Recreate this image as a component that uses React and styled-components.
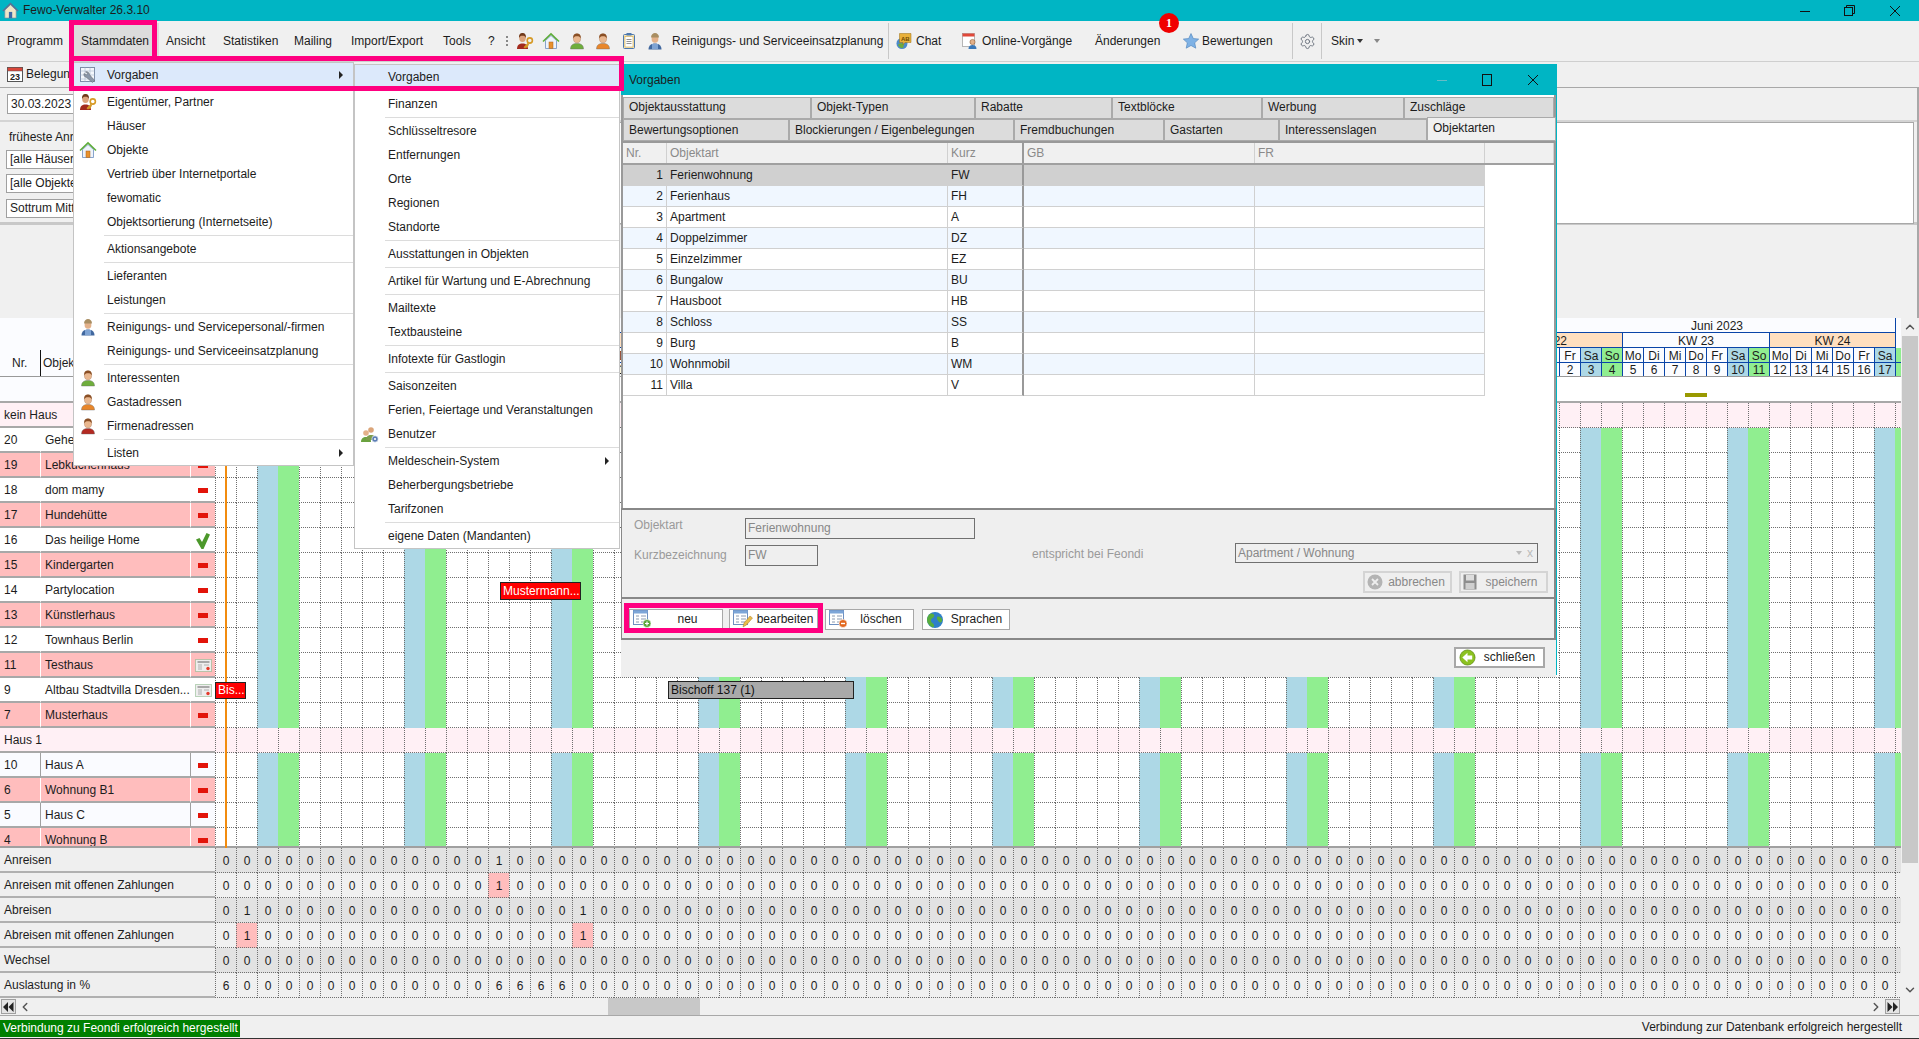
import React from 'react';
import styled, { createGlobalStyle } from 'styled-components';
import { ChevronUp, ChevronDown, ChevronLeft, ChevronRight, Settings } from 'lucide-react';

const GlobalStyle = createGlobalStyle`
  html, body { margin: 0; padding: 0; background: #f0f0f0; }
  body { font: 12px/1.2 "Liberation Sans", Arial, sans-serif; color: #1c1c1c; }
  * { box-sizing: border-box; }
`;

const TEAL = '#00b5c4';
const PINK = '#ff0080';
const COL = 21;

const Window = styled.div`
  position: relative;
  width: 1919px;
  height: 1039px;
  overflow: hidden;
  background: #f0f0f0;
  border-bottom: 1px solid #333;
`;

/* title bar */
const TitleBar = styled.div`
  height: 21px;
  background: ${TEAL};
  display: flex;
  align-items: center;
  padding-left: 2px;
  gap: 4px;
`;
const WinControls = styled.div`
  margin-left: auto;
  display: flex;
  margin-right: 2px;
`;
const WinButton = styled.div`
  width: 45px;
  height: 21px;
  display: flex;
  align-items: center;
  justify-content: center;
`;

/* menu bar */
const MenuBar = styled.div`
  position: relative;
  height: 41px;
  display: flex;
  align-items: center;
  border-bottom: 1px solid #cfcfcf;
`;
const MenuEntry = styled.div`
  width: ${p => p.$w}px;
  height: 36px;
  padding-left: 7px;
  display: flex;
  align-items: center;
  flex: none;
  background: ${p => (p.$open ? '#dcdcdc' : 'transparent')};
`;
const Grip = styled.div`
  width: 6px;
  height: 10px;
  flex: none;
  border-left: 2px dotted #888;
`;
const ToolIcon = styled.div`
  width: 26px;
  height: 36px;
  flex: none;
  display: flex;
  align-items: center;
  justify-content: center;
`;
const GearSlot = styled(ToolIcon)`
  width: 20px;
`;
const ToolButton = styled.div`
  position: relative;
  width: ${p => p.$w}px;
  height: 36px;
  flex: none;
  display: flex;
  align-items: center;
  gap: ${p => p.$gap ?? 4}px;
  padding-left: ${p => p.$pad ?? 2}px;
  white-space: nowrap;
`;
const ToolSep = styled.div`
  width: 9px;
  height: 36px;
  flex: none;
  position: relative;
  &::after {
    content: '';
    position: absolute;
    left: 4px;
    top: 0;
    bottom: 0;
    border-left: 1px solid #c8c8c8;
  }
`;
const Badge = styled.div`
  position: absolute;
  left: 66px;
  top: -10px;
  width: 20px;
  height: 20px;
  border-radius: 50%;
  background: #f00000;
  color: #fff;
  font: bold 12px "Liberation Serif", serif;
  display: flex;
  align-items: center;
  justify-content: center;
  z-index: 3;
`;
const Caret = styled.span`
  width: 0;
  height: 0;
  margin-left: ${p => p.$m ?? 0}px;
  border-left: 3px solid transparent;
  border-right: 3px solid transparent;
  border-top: 4px solid ${p => p.$c ?? '#333'};
`;

/* upper panel */
const BookingTab = styled.div`
  position: absolute;
  left: 7px;
  top: 66px;
  display: flex;
  align-items: center;
  gap: 3px;
`;
const UpperPanel = styled.div`
  position: absolute;
  left: 0;
  top: 87px;
  width: 1919px;
  height: 231px;
  border: 1px solid #a8a8a8;
  border-width: 1px 2px 0 0;
`;
const FilterBand = styled.div`
  position: absolute;
  left: 0;
  top: 32px;
  width: 100%;
  height: 105px;
  border-top: 2px solid #d4d4d4;
  border-bottom: 3px solid #c8c8c8;
`;
const WhiteBox = styled.div`
  position: absolute;
  left: 300px;
  right: 3px;
  top: 0;
  height: 102px;
  background: #fff;
  border: 1px solid #a8a8a8;
`;
const FieldBox = styled.div`
  position: absolute;
  left: ${p => p.$x}px;
  top: ${p => p.$y}px;
  width: 90px;
  height: ${p => p.$h ?? 20}px;
  background: #fff;
  border: 1px solid #a0a0a0;
  padding-left: 3px;
  display: flex;
  align-items: center;
  white-space: nowrap;
  overflow: hidden;
`;
const FilterLabel = styled.div`
  position: absolute;
  left: 9px;
  top: 8px;
`;

/* calendar board */
const Board = styled.div`
  position: absolute;
  left: 0;
  top: 318px;
  width: 1901px;
  height: 680px;
  overflow: hidden;
  background: #fff;
`;
const BoardHead = styled.div`
  display: flex;
  height: 59px;
  border-bottom: 1px solid #999;
  background: #fbfcff;
`;
const HeadLabels = styled.div`
  width: 215px;
  flex: none;
  display: flex;
  align-items: flex-end;
  background: #fbfcff;
`;
const HeadNr = styled.div`
  width: 41px;
  height: 26px;
  padding: 6px 0 0 12px;
  border-right: 1px solid #111;
`;
const HeadName = styled.div`
  height: 26px;
  padding: 6px 0 0 2px;
`;
const CalHead = styled.div`
  display: flex;
  flex-direction: column;
  flex: none;
`;
const CalRow = styled.div`
  display: flex;
  height: ${p => p.$h}px;
`;
const CalCell = styled.div`
  flex: none;
  width: ${p => p.$span * COL}px;
  padding-top: 1px;
  border-left: 1px solid #0a45a8;
  border-bottom: ${p => (p.$under ? '1px solid #0a45a8' : 'none')};
  background: ${p => p.$bg};
  display: flex;
  align-items: center;
  justify-content: center;
  overflow: hidden;
  white-space: nowrap;
  font-size: 12px;
  line-height: 1;
`;
const BlankRow = styled.div`
  height: 26px;
  background: #fff;
  border-bottom: 2px solid #a8a8a8;
  display: flex;
`;
const BlankLeft = styled.div`
  width: 215px;
  background: #fbfcff;
`;
const BoardRow = styled.div`
  display: flex;
  height: ${p => p.$h ?? 25}px;
  overflow: hidden;
`;
const NrCell = styled.div`
  width: 41px;
  flex: none;
  padding: 2px 0 0 4px;
  height: 25px;
  display: flex;
  align-items: center;
  background: ${p => rowTone(p.$tone)};
  border-bottom: 2px solid #a8a8a8;
  border-right: 1px solid ${p => (p.$tone === 'soft' ? '#a0a0a0' : '#fff')};
`;
const NameCell = styled.div`
  width: 150px;
  flex: none;
  padding: 2px 0 0 4px;
  height: 25px;
  display: flex;
  align-items: center;
  white-space: nowrap;
  overflow: hidden;
  background: ${p => rowTone(p.$tone)};
  border-bottom: 2px solid #a8a8a8;
  border-right: 1px solid ${p => (p.$tone === 'soft' ? '#a0a0a0' : '#fff')};
`;
const StateCell = styled.div`
  width: 24px;
  flex: none;
  height: 25px;
  padding-top: 2px;
  display: flex;
  align-items: center;
  justify-content: center;
  background: ${p => rowTone(p.$tone)};
  border-bottom: 2px solid #a8a8a8;
`;
const MinusMark = styled.div`
  width: 10px;
  height: 5px;
  background: #e2140a;
`;
const GroupLabel = styled.div`
  width: 215px;
  flex: none;
  padding: 2px 0 0 4px;
  display: flex;
  align-items: center;
  background: #fff0f5;
  border-bottom: 2px solid #a8a8a8;
`;
const DayStrip = styled.div`
  display: flex;
  flex: none;
  height: 25px;
`;
const DayCell = styled.div`
  width: ${COL}px;
  flex: none;
  background: ${p => dayTone(p.$kind)};
  border-left: 1px dotted ${p => (p.$kind === 'sun' ? 'transparent' : '#6f6f6f')};
  border-bottom: 1px dotted ${p => (p.$kind === 'sat' || p.$kind === 'sun' ? 'transparent' : '#6f6f6f')};
`;
const PinkDay = styled(DayCell)`
  background: #fff0f5;
`;
const StatLabel = styled.div`
  width: 215px;
  flex: none;
  padding: 2px 0 0 4px;
  display: flex;
  align-items: center;
  background: #efefef;
  border-bottom: 2px solid #b0b0b0;
`;
const StatCell = styled.div`
  width: ${COL}px;
  flex: none;
  padding-top: 2px;
  display: flex;
  align-items: center;
  justify-content: center;
  background: ${p => p.$bg};
  border-left: 1px dotted #6f6f6f;
  border-bottom: 1px dotted #6f6f6f;
`;
const StatTop = styled.div`
  height: 2px;
  background: #a0a0a0;
  margin-top: -2px;
  position: relative;
`;
const TodayLine = styled.div`
  position: absolute;
  left: 225px;
  top: 59px;
  width: 2px;
  height: 471px;
  background: #f28c0f;
`;
const Booking = styled.div`
  position: absolute;
  left: ${p => p.$x}px;
  top: ${p => p.$y}px;
  width: ${p => p.$w}px;
  height: ${p => p.$h}px;
  background: ${p => p.$bg};
  color: ${p => p.$fg};
  border: 1px solid #222;
  padding-left: 2px;
  display: flex;
  align-items: center;
  white-space: nowrap;
  overflow: hidden;
`;
const OliveMark = styled.div`
  position: absolute;
  left: 1685px;
  top: 75px;
  width: 22px;
  height: 4px;
  background: #999900;
`;

/* scrollbars and status bar */
const VScroll = styled.div`
  position: absolute;
  left: 1902px;
  top: 318px;
  width: 16px;
  height: 680px;
  background: #f0f0f0;
  color: #555;
`;
const VThumb = styled.div`
  position: absolute;
  left: 0;
  top: 18px;
  width: 16px;
  height: 527px;
  background: #c8c8c8;
`;
const VArrow = styled.div`
  position: absolute;
  left: 0;
  top: ${p => p.$y}px;
  width: 16px;
  height: 16px;
  display: flex;
  align-items: center;
  justify-content: center;
`;
const HScroll = styled.div`
  position: absolute;
  left: 0;
  top: 998px;
  width: 1919px;
  height: 18px;
  background: #f0f0f0;
  border-bottom: 1px solid #a8a8a8;
  color: #555;
`;
const HThumb = styled.div`
  position: absolute;
  left: 608px;
  top: 0;
  width: 92px;
  height: 17px;
  background: #c8c8c8;
`;
const HEndButton = styled.div`
  position: absolute;
  left: ${p => p.$x}px;
  top: 1px;
  width: 15px;
  height: 15px;
  border: 1px solid #a0a0a0;
  background: #e4e4e4;
  display: flex;
  align-items: center;
  justify-content: center;
`;
const HArrow = styled.div`
  position: absolute;
  left: ${p => p.$x}px;
  top: 1px;
  width: 14px;
  height: 15px;
  display: flex;
  align-items: center;
  justify-content: center;
`;
const StatusBar = styled.div`
  position: absolute;
  left: 0;
  top: 1016px;
  width: 1919px;
  height: 22px;
  display: flex;
  align-items: center;
  justify-content: space-between;
  padding-right: 17px;
`;
const StatusOk = styled.div`
  height: 17px;
  width: 240px;
  margin-top: 2px;
  background: #008000;
  color: #fff;
  padding-left: 3px;
  display: flex;
  align-items: center;
`;

/* dropdown menus */
const Menu = styled.div`
  position: absolute;
  left: ${p => p.$x}px;
  top: ${p => p.$y}px;
  width: ${p => p.$w}px;
  background: #fff;
  border: 1px solid #c4c4c4;
  z-index: 30;
`;
const MenuRow = styled.div`
  position: relative;
  height: 24px;
  display: flex;
  align-items: center;
  padding-left: ${p => p.$pad}px;
  white-space: nowrap;
  background: ${p => (p.$active ? '#dce9fb' : 'transparent')};
`;
const MenuIcon = styled.div`
  position: absolute;
  left: ${p => p.$x}px;
  top: 3px;
  width: 18px;
  height: 18px;
`;
const MenuArrow = styled.span`
  position: absolute;
  right: ${p => p.$r}px;
  top: 8px;
  width: 0;
  height: 0;
  border-top: 4px solid transparent;
  border-bottom: 4px solid transparent;
  border-left: 4px solid #222;
`;
const MenuSep = styled.div`
  height: 3px;
  margin-left: ${p => p.$pad}px;
  display: flex;
  align-items: center;
  &::after {
    content: '';
    flex: 1;
    border-top: 1px solid #dcdcdc;
  }
`;
const PinkFrame = styled.div`
  position: absolute;
  left: ${p => p.$x}px;
  top: ${p => p.$y}px;
  width: ${p => p.$w}px;
  height: ${p => p.$h}px;
  border: 5px solid ${PINK};
  z-index: 40;
  pointer-events: none;
`;

/* dialog */
const Dialog = styled.div`
  position: absolute;
  left: 621px;
  top: 64px;
  width: 936px;
  height: 611px;
  background: #efefef;
  border-right: 1px solid ${TEAL};
  z-index: 20;
`;
const DialogTitle = styled.div`
  height: 31px;
  background: ${TEAL};
  display: flex;
  align-items: center;
  padding: 2px 0 0 8px;
  position: relative;
`;
const DialogControl = styled.div`
  position: absolute;
  left: ${p => p.$x}px;
  top: 9px;
  width: 14px;
  height: 14px;
  display: flex;
  align-items: center;
  justify-content: center;
`;
const DialogFrame = styled.div`
  height: 580px;
  padding-top: 2px;
  background: #fff;
  border-left: 2px solid #999;
  border-right: 2px solid #999;
`;
const TabRow = styled.div`
  display: flex;
  height: 22px;
`;
const Tab = styled.div`
  width: ${p => p.$w}px;
  flex: none;
  height: ${p => (p.$active ? 24 : 22)}px;
  margin-top: ${p => (p.$active ? -2 : 0)}px;
  padding: 0 0 ${p => p.$lift ?? 0}px 5px;
  display: flex;
  align-items: center;
  background: ${p => (p.$active ? '#f0f0f0' : '#dcdcdc')};
  border: 1px solid #aaa;
  position: relative;
  z-index: ${p => (p.$active ? 2 : 1)};
`;
const GridBox = styled.div`
  height: 367px;
  background: #fff;
  border-top: 2px solid #999;
`;
const GridRow = styled.div`
  display: grid;
  grid-template-columns: 44px 281px 76px 231px 230px ${p => (p.$head ? '1fr' : '')};
  height: ${p => (p.$head ? 22 : 21)}px;
  width: ${p => (p.$head ? 'auto' : '862px')};
  background: ${p => p.$bg};
  ${p => (p.$head ? 'border-bottom: 2px solid #a0a0a0; color: #8a8a8a;' : '')}
`;
const GridCell = styled.div`
  padding: 0 3px 0 ${p => (p.$right ? 0 : 3)}px;
  display: flex;
  align-items: center;
  justify-content: ${p => (p.$right ? 'flex-end' : 'flex-start')};
  border-right: ${p => (p.$strong ? '2px solid #999' : '1px solid #d0d0d0')};
  border-bottom: ${p => (p.$head ? 'none' : '1px solid #d0d0d0')};
  overflow: hidden;
`;
const DetailPanel = styled.div`
  position: relative;
  height: 91px;
  margin: 0 -2px;
  background: #efefef;
  border: 1px solid #888;
  border-width: 2px 2px 2px 1px;
  color: #9a9a9a;
`;
const DetailLabel = styled.div`
  position: absolute;
  left: ${p => p.$x}px;
  top: ${p => p.$y}px;
`;
const DetailInput = styled.div`
  position: absolute;
  left: ${p => p.$x}px;
  top: ${p => p.$y}px;
  width: ${p => p.$w}px;
  height: ${p => p.$h}px;
  border: 1px solid #707070;
  padding-left: 2px;
  display: flex;
  align-items: center;
  color: #888;
`;
const SelectTools = styled.div`
  margin-left: auto;
  margin-right: 4px;
  display: flex;
  align-items: center;
  gap: 5px;
  color: #bbb;
`;
const FlatButton = styled.div`
  position: absolute;
  left: ${p => p.$x}px;
  top: 61px;
  width: ${p => p.$w}px;
  height: 22px;
  border: 2px solid #d4d4d4;
  display: flex;
  align-items: center;
  padding-left: 2px;
  color: #888;
`;
const ButtonText = styled.span`
  flex: 1;
  text-align: center;
  white-space: nowrap;
`;
const ActionRow = styled.div`
  display: flex;
  align-items: center;
  height: 41px;
  margin: 0 -2px;
  padding: 2px 0 0 7px;
  background: #efefef;
  border: 1px solid #888;
  border-width: 0 2px 2px 1px;
`;
const ActionButton = styled.div`
  width: ${p => p.$w}px;
  height: 21px;
  flex: none;
  margin-left: ${p => p.$m ?? 0}px;
  background: #fff;
  border: 1px solid #a8a8a8;
  display: flex;
  align-items: center;
  padding-left: 3px;
`;
const FooterRow = styled.div`
  height: 37px;
  margin: 0 -2px;
  background: #efefef;
  display: flex;
  justify-content: flex-end;
  padding: 7px 11px 0 0;
`;
const CloseButton = styled(ActionButton)`
  border-width: 2px;
`;

/* drawings */
const Person = ({ shirt, hair = '#8a4f25', size = 18 }) => (
  <svg width={size} height={size} viewBox="0 0 18 18">
    <path d="M2.500 17c0-4 2.600-5.600 6.500-5.600s6.500 1.600 6.500 5.600z" fill={shirt} stroke="#666" strokeWidth=".4" />
    <ellipse cx="9" cy="6.500" rx="3.600" ry="4.300" fill="#e9b78f" stroke="#a77450" strokeWidth=".4" />
    <path d="M5.300 6.500C4.800 2.400 7 1.500 9 1.500s4.200 1 3.700 5c-.6-1.800-1.700-2.300-3.700-2.300s-3.100.5-3.700 2.300z" fill={hair} />
  </svg>
);
const KeyPerson = () => (
  <svg width="18" height="18" viewBox="0 0 18 18">
    <path d="M1 17c0-4 2.300-5.600 5.500-5.600S12 13 12 17z" fill="#a32a1d" />
    <ellipse cx="6.500" cy="6" rx="3.300" ry="4" fill="#dca37c" />
    <path d="M3.100 6C2.700 2.200 4.600 1 6.500 1s3.800 1.200 3.400 5C9.300 4.300 8.300 3.800 6.500 3.800S3.700 4.300 3.100 6z" fill="#70391a" />
    <circle cx="13.800" cy="8.500" r="2.600" fill="none" stroke="#d69a26" strokeWidth="1.600" />
    <path d="M12 10.500l-4.500 4.700 1.500 1.200 1.200-1 .8.500 2-3.500z" fill="#d69a26" />
  </svg>
);
const House = () => (
  <svg width="18" height="18" viewBox="0 0 18 18">
    <path d="M3.500 8.500V16.500H14.500V8.500L9 3.500z" fill="#eef3fb" stroke="#6d8fc0" strokeWidth=".8" />
    <path d="M1 9.500L9 1.800l8 7.700" fill="none" stroke="#5fae3a" strokeWidth="1.600" />
    <rect x="7" y="10" width="4" height="6.500" fill="#e8912d" stroke="#a9601a" strokeWidth=".5" />
  </svg>
);
const AppHouse = () => (
  <svg width="17" height="17" viewBox="0 0 18 18">
    <path d="M3 8.500V17H15V8.500L9 3z" fill="#f0e6c8" stroke="#7a8aa0" strokeWidth=".7" />
    <path d="M1 9.500L9 1.500l8 8" fill="none" stroke="#5a6f92" strokeWidth="1.500" />
    <rect x="7.300" y="10.500" width="3.500" height="6.500" fill="#3f68a8" />
  </svg>
);
const Clipboard = () => (
  <svg width="18" height="18" viewBox="0 0 18 18">
    <rect x="3.500" y="2.500" width="11" height="14" rx="1" fill="#f7e6b5" stroke="#4d78b0" />
    <rect x="5" y="4.500" width="8" height="10.500" fill="#fff" stroke="#c99a33" strokeWidth=".5" />
    <rect x="6.500" y="1" width="5" height="2.500" fill="#4d78b0" />
    <path d="M6.500 7.500h5M6.500 9.500h5M6.500 11.500h5" stroke="#777" strokeWidth=".8" />
  </svg>
);
const Worker = ({ size = 18 }) => (
  <svg width={size} height={size} viewBox="0 0 18 18">
    <path d="M2.500 17.500c0-4 2.600-6 6.500-6s6.500 2 6.500 6z" fill="#41689f" />
    <rect x="6" y="12" width="6" height="5" fill="#7ea3d3" />
    <ellipse cx="9" cy="7" rx="3.400" ry="3.800" fill="#e3b18a" />
    <path d="M5 5.500C5 2.500 7 1 9 1s4 1.500 4 4.500z" fill="#a98e62" />
  </svg>
);
const ChatIcon = () => (
  <svg width="18" height="18" viewBox="0 0 18 18">
    <circle cx="7" cy="11.500" r="5.500" fill="#4b8ac9" />
    <path d="M3 13c1.500-2.500 4-2 6-1l-1 4c-2 .5-4-1-5-3z" fill="#6faa3c" />
    <path d="M4.500 1.500h11.500v9h-6l-2 2v-2H4.500z" fill="#e8b13c" stroke="#9b6d12" strokeWidth=".5" />
    <text x="6" y="8.500" fontSize="6" fontWeight="bold" fontFamily="Liberation Sans" fill="#6d4a05">AB</text>
  </svg>
);
const OnlineIcon = () => (
  <svg width="18" height="18" viewBox="0 0 18 18">
    <rect x="1.500" y="1.500" width="12" height="13" fill="#fff" stroke="#9a9a9a" strokeWidth=".7" />
    <rect x="1.500" y="1.500" width="12" height="3" fill="#e0493a" />
    <path d="M7.500 17c0-3 1.800-4 4-4s4 1 4 4z" fill="#3a78b8" />
    <circle cx="11.500" cy="10" r="2.600" fill="#e3b18a" stroke="#7a4a20" strokeWidth=".5" />
  </svg>
);
const StarIcon = () => (
  <svg width="18" height="18" viewBox="0 0 18 18">
    <path d="M9 1.500l2.300 5 5.400.6-4 3.700 1.100 5.400L9 13.500l-4.800 2.700 1.100-5.400-4-3.700 5.400-.6z" fill="#7fb2e5" stroke="#4a7fb8" strokeWidth=".6" />
  </svg>
);
const TableWrench = () => (
  <svg width="18" height="18" viewBox="0 0 18 18">
    <rect x="1.500" y="1.500" width="14" height="14" fill="#f4f7fc" stroke="#7d8ea8" />
    <path d="M1.500 5h14M1.500 9h14M1.500 13h14M6 1.500v14M11 1.500v14" stroke="#aab8cc" strokeWidth=".6" />
    <path d="M5 7.500a3 3 0 0 0 2.500 4l6 5 2-2-5-6a3 3 0 0 0-4-2.700l2 2-1 1z" fill="#8a96a8" stroke="#555" strokeWidth=".4" />
  </svg>
);
const UsersGear = () => (
  <svg width="20" height="18" viewBox="0 0 20 18">
    <path d="M1 17c0-3.500 2-5 5-5s5 1.500 5 5z" fill="#6aa23f" />
    <circle cx="6" cy="8" r="2.800" fill="#e3b18a" />
    <path d="M6 15c0-3.500 2-5 5-5s5 1.500 5 5z" fill="#7d9c4b" />
    <circle cx="11" cy="5" r="2.800" fill="#dba579" />
    <circle cx="15" cy="14" r="3.200" fill="#5d7fb5" stroke="#fff" strokeWidth=".6" />
    <circle cx="15" cy="14" r="1.100" fill="#fff" />
  </svg>
);
const CalendarBig = () => (
  <svg width="16" height="16" viewBox="0 0 16 16">
    <rect x=".5" y="1.500" width="15" height="14" fill="#fff" stroke="#555" />
    <rect x=".5" y="1.500" width="15" height="3.500" fill="#d9463a" stroke="#555" strokeWidth=".5" />
    <text x="8" y="13.500" textAnchor="middle" fontSize="9" fontWeight="bold" fontFamily="Liberation Sans" fill="#222">23</text>
  </svg>
);
const MiniCal = () => (
  <svg width="17" height="13" viewBox="0 0 17 13">
    <rect x=".5" y=".5" width="16" height="12" fill="#eee" stroke="#7cae7c" strokeDasharray="1 1" />
    <rect x="2.500" y="2" width="12" height="2" fill="#a8a8a8" />
    <path d="M3 6h4M3 8h4M3 10h4M9 6h5" stroke="#b0b0b0" />
    <circle cx="13" cy="9.500" r="1.700" fill="#e43a2a" />
  </svg>
);
const CheckMark = () => (
  <svg width="14" height="16" viewBox="0 0 14 16">
    <path d="M0 6.500l3.500-1.500 2.500 4L10.500 0 14 1.500 7.500 16H5.500z" fill="#4c982b" />
  </svg>
);
const DocIcon = ({ badge }) => (
  <svg width="20" height="19" viewBox="0 0 20 19">
    <rect x=".5" y=".5" width="14" height="14" fill="#fff" stroke="#6d8fc0" />
    <rect x=".5" y=".5" width="14" height="3" fill="#7da6d8" />
    <path d="M3 6h3M3 9h3M3 12h3M8 6h5M8 9h5M8 12h5" stroke="#8a9ab0" />
    {badge === 'add' && (
      <g>
        <circle cx="14" cy="13.500" r="4" fill="#5aa63a" stroke="#fff" strokeWidth=".6" />
        <path d="M12 13.500h4M14 11.500v4" stroke="#fff" strokeWidth="1.200" />
      </g>
    )}
    {badge === 'edit' && <path d="M10 17l1-4 6-7 2.500 2-6 7z" fill="#e9bd4a" stroke="#a8782a" strokeWidth=".5" />}
    {badge === 'del' && (
      <g>
        <circle cx="14" cy="13.500" r="4" fill="#e2661c" stroke="#fff" strokeWidth=".6" />
        <path d="M12 13.500h4" stroke="#fff" strokeWidth="1.400" />
      </g>
    )}
  </svg>
);
const Globe = () => (
  <svg width="18" height="18" viewBox="0 0 18 18">
    <circle cx="9" cy="9" r="8" fill="#2f7fc9" />
    <path d="M5 2.500c2 0 4 1 3 3S5 7 5 9.500 7.500 12 8 14s-1 2.500-2 2C3 14.500 1 12 1 9s2-6 4-6.500zM11 6c2-1 4 0 5 2 .5 2-.5 4-2 3.500S10.500 8 11 6z" fill="#58ad3e" />
  </svg>
);
const BackCircle = () => (
  <svg width="17" height="17" viewBox="0 0 18 18">
    <circle cx="9" cy="9" r="8" fill="#8cc21f" stroke="#5d8a0f" strokeWidth=".8" />
    <path d="M3.500 9L9 4v3h5v4H9v3z" fill="#fff" />
  </svg>
);
const CancelCircle = () => (
  <svg width="16" height="16" viewBox="0 0 16 16">
    <circle cx="8" cy="8" r="7.500" fill="#b4b4b4" />
    <path d="M5 5l6 6M11 5l-6 6" stroke="#eee" strokeWidth="1.800" />
  </svg>
);
const Floppy = () => (
  <svg width="14" height="16" viewBox="0 0 14 16">
    <rect x=".5" y=".5" width="13" height="15" fill="#8e8e8e" />
    <rect x="3" y="1" width="8" height="5.500" fill="#ddd" />
    <rect x="2.500" y="9" width="9" height="6" fill="#cfcfcf" />
  </svg>
);
const EndArrows = ({ flip }) => (
  <svg width="11" height="10" viewBox="0 0 11 10">
    <g transform={flip ? 'matrix(-1 0 0 1 11 0)' : undefined} fill="#222">
      <path d="M5 0v10L0 5zM10.500 0v10l-5-5z" />
    </g>
  </svg>
);

const WinMin = () => (
  <svg width="12" height="12" viewBox="0 0 12 12"><path d="M1 6.500h10" stroke="#111" /></svg>
);
const WinRestore = () => (
  <svg width="12" height="12" viewBox="0 0 12 12" fill="none" stroke="#111">
    <rect x=".5" y="2.500" width="8" height="8" />
    <path d="M2.500 2.500v-2h8v8h-2" />
  </svg>
);
const WinClose = () => (
  <svg width="12" height="12" viewBox="0 0 12 12"><path d="M1 1l10 10M11 1L1 11" stroke="#111" /></svg>
);
const DlgMax = () => (
  <svg width="12" height="14" viewBox="0 0 12 14" fill="none" stroke="#111"><rect x="1.500" y="1.500" width="9" height="11" /></svg>
);
const DlgMin = () => (
  <svg width="12" height="12" viewBox="0 0 12 12"><path d="M1 6.500h10" stroke="#66bcc6" /></svg>
);

/* data */
const firstMenu = [
  { t: 'Vorgaben', icon: <TableWrench />, arrow: true, active: true },
  'sep',
  { t: 'Eigentümer, Partner', icon: <KeyPerson /> },
  { t: 'Häuser' },
  { t: 'Objekte', icon: <House /> },
  { t: 'Vertrieb über Internetportale' },
  { t: 'fewomatic' },
  { t: 'Objektsortierung (Internetseite)' },
  'sep',
  { t: 'Aktionsangebote' },
  'sep',
  { t: 'Lieferanten' },
  { t: 'Leistungen' },
  'sep',
  { t: 'Reinigungs- und Servicepersonal/-firmen', icon: <Worker /> },
  { t: 'Reinigungs- und Serviceeinsatzplanung' },
  'sep',
  { t: 'Interessenten', icon: <Person shirt="#6fae3c" /> },
  { t: 'Gastadressen', icon: <Person shirt="#e8862a" /> },
  { t: 'Firmenadressen', icon: <Person shirt="#b32a22" /> },
  'sep',
  { t: 'Listen', arrow: true },
];
const secondMenu = [
  { t: 'Vorgaben', active: true },
  'sep',
  { t: 'Finanzen' },
  'sep',
  { t: 'Schlüsseltresore' },
  { t: 'Entfernungen' },
  { t: 'Orte' },
  { t: 'Regionen' },
  { t: 'Standorte' },
  'sep',
  { t: 'Ausstattungen in Objekten' },
  'sep',
  { t: 'Artikel für Wartung und E-Abrechnung' },
  'sep',
  { t: 'Mailtexte' },
  { t: 'Textbausteine' },
  'sep',
  { t: 'Infotexte für Gastlogin' },
  'sep',
  { t: 'Saisonzeiten' },
  { t: 'Ferien, Feiertage und Veranstaltungen' },
  { t: 'Benutzer', icon: <UsersGear /> },
  'sep',
  { t: 'Meldeschein-System', arrow: true },
  { t: 'Beherbergungsbetriebe' },
  { t: 'Tarifzonen' },
  'sep',
  { t: 'eigene Daten (Mandanten)' },
];

const tabsTop = [
  ['Objektausstattung', 188],
  ['Objekt-Typen', 164],
  ['Rabatte', 137],
  ['Textblöcke', 150],
  ['Werbung', 142],
  ['Zuschläge', 150],
];
const tabsBottom = [
  ['Bewertungsoptionen', 166],
  ['Blockierungen / Eigenbelegungen', 225],
  ['Fremdbuchungen', 150],
  ['Gastarten', 115],
  ['Interessenslagen', 148],
  ['Objektarten', 129, true],
];
const kinds = [
  ['Ferienwohnung', 'FW'],
  ['Ferienhaus', 'FH'],
  ['Apartment', 'A'],
  ['Doppelzimmer', 'DZ'],
  ['Einzelzimmer', 'EZ'],
  ['Bungalow', 'BU'],
  ['Hausboot', 'HB'],
  ['Schloss', 'SS'],
  ['Burg', 'B'],
  ['Wohnmobil', 'WM'],
  ['Villa', 'V'],
];

const boardRows = [
  { group: 'kein Haus' },
  { nr: 20, name: 'Geheimtipp', tone: 'plain', state: 'minus' },
  { nr: 19, name: 'Lebkuchenhaus', tone: 'pink', state: 'minus' },
  { nr: 18, name: 'dom mamy', tone: 'plain', state: 'minus' },
  { nr: 17, name: 'Hundehütte', tone: 'pink', state: 'minus' },
  { nr: 16, name: 'Das heilige Home', tone: 'plain', state: 'check' },
  { nr: 15, name: 'Kindergarten', tone: 'pink', state: 'minus' },
  { nr: 14, name: 'Partylocation', tone: 'plain', state: 'minus' },
  { nr: 13, name: 'Künstlerhaus', tone: 'pink', state: 'minus' },
  { nr: 12, name: 'Townhaus Berlin', tone: 'plain', state: 'minus' },
  { nr: 11, name: 'Testhaus', tone: 'pink', state: 'cal' },
  { nr: 9, name: 'Altbau Stadtvilla Dresden...', tone: 'plain', state: 'cal' },
  { nr: 7, name: 'Musterhaus', tone: 'pink', state: 'minus' },
  { group: 'Haus 1' },
  { nr: 10, name: 'Haus A', tone: 'soft', state: 'minus' },
  { nr: 6, name: 'Wohnung B1', tone: 'pink', state: 'minus' },
  { nr: 5, name: 'Haus C', tone: 'soft', state: 'minus' },
  { nr: 4, name: 'Wohnung B', tone: 'pink', state: 'minus', h: 20 },
];

const statRows = [
  { label: 'Anreisen', hits: { 13: 1 } },
  { label: 'Anreisen mit offenen Zahlungen', hits: { 13: 1 }, alert: true },
  { label: 'Abreisen', hits: { 1: 1, 17: 1 } },
  { label: 'Abreisen mit offenen Zahlungen', hits: { 1: 1, 17: 1 }, alert: true },
  { label: 'Wechsel', hits: {} },
  { label: 'Auslastung in %', hits: { 0: 6, 13: 6, 14: 6, 15: 6, 16: 6 } },
];

const DAY_NAMES = ['So', 'Mo', 'Di', 'Mi', 'Do', 'Fr', 'Sa'];
const MONTHS = ['Januar', 'Februar', 'März', 'April', 'Mai', 'Juni', 'Juli'];
const LAST_DAY = 80; // only a sliver of this column is on screen, so it carries no text
const days = Array.from({ length: 81 }, (_, i) => {
  const d = new Date(2023, 2, 30 + i);
  const wd = d.getDay();
  return {
    i,
    date: d.getDate(),
    name: DAY_NAMES[wd],
    kind: wd === 6 ? 'sat' : wd === 0 ? 'sun' : 'plain',
    week: 13 + Math.floor((i + 3) / 7),
    month: `${MONTHS[d.getMonth()]} 2023`,
  };
});

function spansBy(list, key) {
  const out = [];
  list.forEach(d => {
    const last = out[out.length - 1];
    if (last && last.value === d[key]) last.span += 1;
    else out.push({ value: d[key], span: 1 });
  });
  return out;
}

function rowTone(tone) {
  if (tone === 'pink') return '#ffbdbd';
  if (tone === 'soft') return '#fafbff';
  return '#fff';
}
function dayTone(kind) {
  if (kind === 'sat') return '#add8e6';
  if (kind === 'sun') return '#90ee90';
  return 'transparent';
}
function headTone(kind) {
  if (kind === 'sat') return '#add8e6';
  if (kind === 'sun') return '#90ee90';
  return '#fbfcff';
}

const stateIcon = state => {
  if (state === 'check') return <CheckMark />;
  if (state === 'cal') return <MiniCal />;
  return <MinusMark />;
};

const MenuList = ({ items, x, y, w, pad, iconX, arrowR }) => (
  <Menu $x={x} $y={y} $w={w}>
    {items.map((it, idx) =>
      it === 'sep' ? (
        <MenuSep key={idx} $pad={pad - 3} />
      ) : (
        <MenuRow key={idx} $pad={pad} $active={it.active}>
          {it.icon && <MenuIcon $x={iconX}>{it.icon}</MenuIcon>}
          {it.t}
          {it.arrow && <MenuArrow $r={arrowR} />}
        </MenuRow>
      )
    )}
  </Menu>
);

const CalendarHead = () => {
  const shown = days.slice(0, LAST_DAY);
  return (
    <CalHead>
      <CalRow $h={15}>
        {spansBy(shown, 'month').map(m => (
          <CalCell key={m.value} $span={m.span} $bg="#fbfcff" $under>
            {m.span > 2 ? m.value : ''}
          </CalCell>
        ))}
        <CalCell $span={1} $bg="#fbfcff" />
      </CalRow>
      <CalRow $h={15}>
        {spansBy(shown, 'week').map(k => (
          <CalCell key={k.value} $span={k.span} $bg={k.value % 2 === 0 ? '#ffdfbf' : '#fbfcff'} $under>
            KW {k.value}
          </CalCell>
        ))}
        <CalCell $span={1} $bg="#fbfcff" />
      </CalRow>
      <CalRow $h={15}>
        {days.map(d => (
          <CalCell key={d.i} $span={1} $bg={headTone(d.kind)} $under>
            {d.i === LAST_DAY ? '' : d.name}
          </CalCell>
        ))}
      </CalRow>
      <CalRow $h={13}>
        {days.map(d => (
          <CalCell key={d.i} $span={1} $bg={headTone(d.kind)}>
            {d.i === LAST_DAY ? '' : d.date}
          </CalCell>
        ))}
      </CalRow>
    </CalHead>
  );
};

const DayRow = () => (
  <DayStrip>
    {days.map(d => (
      <DayCell key={d.i} $kind={d.kind} />
    ))}
  </DayStrip>
);

const PinkStrip = () => (
  <DayStrip>
    {days.map(d => (
      <PinkDay key={d.i} />
    ))}
  </DayStrip>
);

const Calendar = () => (
  <Board>
    <BoardHead>
      <HeadLabels>
        <HeadNr>Nr.</HeadNr>
        <HeadName>Objekt</HeadName>
      </HeadLabels>
      <CalendarHead />
    </BoardHead>
    <BlankRow>
      <BlankLeft />
    </BlankRow>
    {boardRows.map((r, idx) =>
      r.group ? (
        <BoardRow key={idx}>
          <GroupLabel>{r.group}</GroupLabel>
          <PinkStrip />
        </BoardRow>
      ) : (
        <BoardRow key={idx} $h={r.h}>
          <NrCell $tone={r.tone}>{r.nr}</NrCell>
          <NameCell $tone={r.tone}>{r.name}</NameCell>
          <StateCell $tone={r.tone}>{stateIcon(r.state)}</StateCell>
          <DayRow />
        </BoardRow>
      )
    )}
    <StatTop />
    {statRows.map((s, idx) => (
      <BoardRow key={s.label}>
        <StatLabel>{s.label}</StatLabel>
        <DayStrip>
          {days.map(d => {
            const hit = s.hits[d.i];
            const bg = hit && s.alert ? '#ffbdbd' : idx % 2 === 0 ? '#e2e2e2' : '#f0f0f0';
            return (
              <StatCell key={d.i} $bg={bg}>
                {d.i === LAST_DAY ? '' : hit ?? 0}
              </StatCell>
            );
          })}
        </DayStrip>
      </BoardRow>
    ))}
    <TodayLine />
    <OliveMark />
    <Booking $x={500} $y={264} $w={81} $h={18} $bg="#ff0000" $fg="#fff">Mustermann...</Booking>
    <Booking $x={215} $y={364} $w={31} $h={17} $bg="#ff0000" $fg="#fff">Bis...</Booking>
    <Booking $x={668} $y={363} $w={186} $h={18} $bg="#a9a9a9" $fg="#111">Bischoff 137 (1)</Booking>
  </Board>
);

const VorgabenDialog = () => (
  <Dialog>
    <DialogTitle>
      Vorgaben
      <DialogControl $x={814}><DlgMin /></DialogControl>
      <DialogControl $x={859}><DlgMax /></DialogControl>
      <DialogControl $x={905}><WinClose /></DialogControl>
    </DialogTitle>
    <DialogFrame>
      <TabRow>
        {tabsTop.map(([t, w]) => (
          <Tab key={t} $w={w} $lift={1}>{t}</Tab>
        ))}
      </TabRow>
      <TabRow>
        {tabsBottom.map(([t, w, active]) => (
          <Tab key={t} $w={w} $active={active} $lift={active ? 2 : 0}>{t}</Tab>
        ))}
      </TabRow>
      <GridBox>
        <GridRow $head $bg="#f0f0f0">
          <GridCell $head>Nr.</GridCell>
          <GridCell $head>Objektart</GridCell>
          <GridCell $head $strong>Kurz</GridCell>
          <GridCell $head>GB</GridCell>
          <GridCell $head>FR</GridCell>
          <GridCell $head />
        </GridRow>
        {kinds.map(([name, short], i) => (
          <GridRow key={short} $bg={i === 0 ? '#d0d0d0' : i % 2 === 1 ? '#f0f7ff' : '#fff'}>
            <GridCell $right>{i + 1}</GridCell>
            <GridCell>{name}</GridCell>
            <GridCell $strong>{short}</GridCell>
            <GridCell />
            <GridCell />
          </GridRow>
        ))}
      </GridBox>
      <DetailPanel>
        <DetailLabel $x={12} $y={8}>Objektart</DetailLabel>
        <DetailInput $x={123} $y={8} $w={230} $h={21}>Ferienwohnung</DetailInput>
        <DetailLabel $x={12} $y={38}>Kurzbezeichnung</DetailLabel>
        <DetailInput $x={123} $y={35} $w={73} $h={21}>FW</DetailInput>
        <DetailLabel $x={410} $y={37}>entspricht bei Feondi</DetailLabel>
        <DetailInput $x={613} $y={33} $w={303} $h={20}>
          Apartment / Wohnung
          <SelectTools>
            <Caret $c="#bbb" />
            <span>x</span>
          </SelectTools>
        </DetailInput>
        <FlatButton $x={741} $w={89}>
          <CancelCircle />
          <ButtonText>abbrechen</ButtonText>
        </FlatButton>
        <FlatButton $x={837} $w={89}>
          <Floppy />
          <ButtonText>speichern</ButtonText>
        </FlatButton>
      </DetailPanel>
      <ActionRow>
        <ActionButton $w={94}>
          <DocIcon badge="add" />
          <ButtonText>neu</ButtonText>
        </ActionButton>
        <ActionButton $w={89} $m={6}>
          <DocIcon badge="edit" />
          <ButtonText>bearbeiten</ButtonText>
        </ActionButton>
        <ActionButton $w={89} $m={7}>
          <DocIcon badge="del" />
          <ButtonText>löschen</ButtonText>
        </ActionButton>
        <ActionButton $w={88} $m={8}>
          <Globe />
          <ButtonText>Sprachen</ButtonText>
        </ActionButton>
      </ActionRow>
      <FooterRow>
        <CloseButton $w={91}>
          <BackCircle />
          <ButtonText>schließen</ButtonText>
        </CloseButton>
      </FooterRow>
    </DialogFrame>
  </Dialog>
);

export default function App() {
  return (
    <Window>
      <GlobalStyle />
      <TitleBar>
        <AppHouse />
        Fewo-Verwalter 26.3.10
        <WinControls>
          <WinButton><WinMin /></WinButton>
          <WinButton><WinRestore /></WinButton>
          <WinButton><WinClose /></WinButton>
        </WinControls>
      </TitleBar>

      <MenuBar>
        <MenuEntry $w={74}>Programm</MenuEntry>
        <MenuEntry $w={85} $open>Stammdaten</MenuEntry>
        <MenuEntry $w={57}>Ansicht</MenuEntry>
        <MenuEntry $w={71}>Statistiken</MenuEntry>
        <MenuEntry $w={57}>Mailing</MenuEntry>
        <MenuEntry $w={92}>Import/Export</MenuEntry>
        <MenuEntry $w={45}>Tools</MenuEntry>
        <MenuEntry $w={25}>?</MenuEntry>
        <Grip />
        <ToolIcon><KeyPerson /></ToolIcon>
        <ToolIcon><House /></ToolIcon>
        <ToolIcon><Person shirt="#6fae3c" /></ToolIcon>
        <ToolIcon><Person shirt="#e8862a" /></ToolIcon>
        <ToolIcon><Clipboard /></ToolIcon>
        <ToolIcon><Worker /></ToolIcon>
        <ToolButton $w={216} $pad={4}>Reinigungs- und Serviceeinsatzplanung</ToolButton>
        <ToolSep />
        <ToolButton $w={66} $gap={3}><ChatIcon />Chat</ToolButton>
        <ToolButton $w={134} $gap={3}><OnlineIcon />Online-Vorgänge</ToolButton>
        <ToolButton $w={89}>
          Änderungen
          <Badge>1</Badge>
        </ToolButton>
        <ToolButton $w={106} $pad={0} $gap={2}><StarIcon />Bewertungen</ToolButton>
        <ToolSep />
        <GearSlot><Settings size={17} color="#6d7480" strokeWidth={1.4} /></GearSlot>
        <ToolSep />
        <ToolButton $w={60} $pad={5} $gap={3}>
          Skin
          <Caret />
          <Caret $c="#888" $m={8} />
        </ToolButton>
      </MenuBar>

      <BookingTab>
        <CalendarBig />
        Belegung
      </BookingTab>
      <UpperPanel>
        <FieldBox $x={7} $y={6}>30.03.2023</FieldBox>
        <FilterBand>
          <FilterLabel>früheste Anreise</FilterLabel>
          <FieldBox $x={6} $y={28} $h={19}>[alle Häuser]</FieldBox>
          <FieldBox $x={6} $y={52} $h={19}>[alle Objekte]</FieldBox>
          <FieldBox $x={6} $y={77} $h={19}>Sottrum Mitte</FieldBox>
          <WhiteBox />
        </FilterBand>
      </UpperPanel>

      <Calendar />

      <VScroll>
        <VArrow $y={1}><ChevronUp size={14} strokeWidth={2.5} /></VArrow>
        <VThumb />
        <VArrow $y={664}><ChevronDown size={14} strokeWidth={2.5} /></VArrow>
      </VScroll>
      <HScroll>
        <HEndButton $x={1}><EndArrows /></HEndButton>
        <HArrow $x={18}><ChevronLeft size={14} strokeWidth={2.5} /></HArrow>
        <HThumb />
        <HArrow $x={1869}><ChevronRight size={14} strokeWidth={2.5} /></HArrow>
        <HEndButton $x={1885}><EndArrows flip /></HEndButton>
      </HScroll>
      <StatusBar>
        <StatusOk>Verbindung zu Feondi erfolgreich hergestellt</StatusOk>
        Verbindung zur Datenbank erfolgreich hergestellt
      </StatusBar>

      <VorgabenDialog />

      <MenuList items={firstMenu} x={73} y={62} w={281} pad={33} iconX={5} arrowR={10} />
      <MenuList items={secondMenu} x={354} y={64} w={266} pad={33} iconX={5} arrowR={10} />

      <PinkFrame $x={69} $y={20} $w={88} $h={41} />
      <PinkFrame $x={69} $y={56} $w={555} $h={35} />
      <PinkFrame $x={624} $y={603} $w={199} $h={30} />
    </Window>
  );
}
